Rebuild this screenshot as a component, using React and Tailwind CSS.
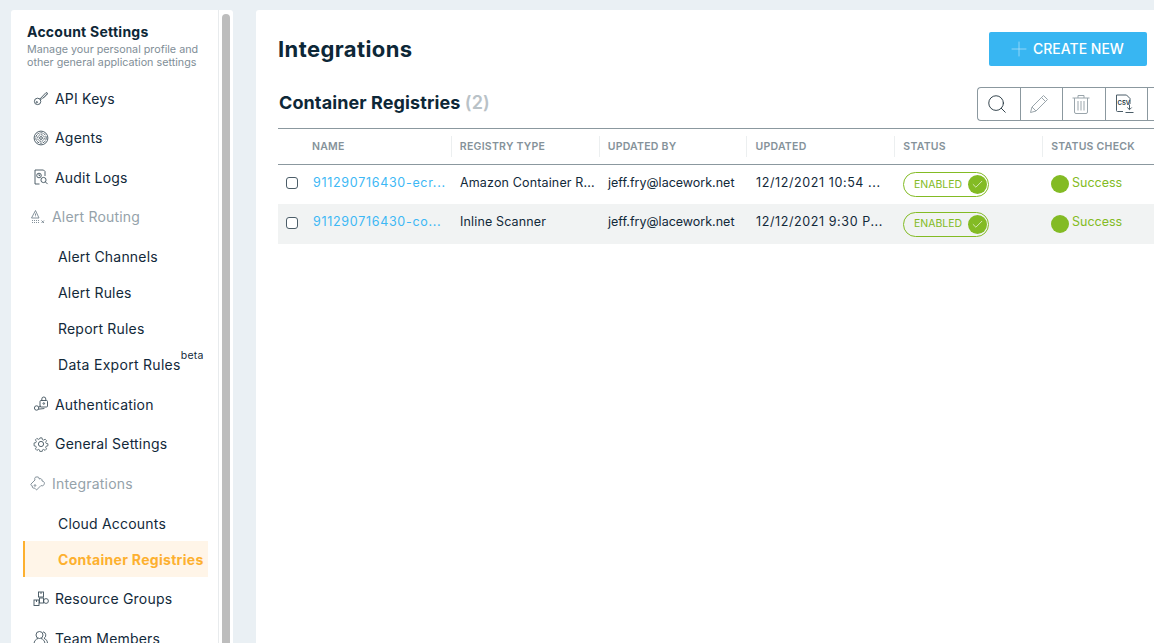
import { Search, Plus, Check } from "lucide-react";

const KeyIcon = () => (
  <svg width="16" height="16" viewBox="0 0 16 16" fill="none" stroke="currentColor" strokeWidth="0.9">
    <circle cx="4.6" cy="11.4" r="3.2" />
    <circle cx="3.8" cy="12.2" r="0.7" />
    <path d="M6.8 9.1 13 2.6l1.4.4-.2 1.5-1.3.4-.2 1.2-1.3.3-.3 1.2-1.3.2-2 2" />
  </svg>
);

const AgentIcon = () => (
  <svg width="16" height="16" viewBox="0 0 16 16" fill="none" stroke="currentColor" strokeWidth="0.9">
    <circle cx="8" cy="8" r="6.9" />
    <circle cx="8" cy="8" r="5.2" strokeDasharray="2.5 0.8" />
    <circle cx="8" cy="8" r="3.3" strokeDasharray="1.8 0.7" />
    <circle cx="8" cy="8" r="1.4" />
  </svg>
);

const AuditIcon = () => (
  <svg width="16" height="16" viewBox="0 0 16 16" fill="none" stroke="currentColor" strokeWidth="0.9">
    <path d="M6.5 15H2V1h8.5l1.5 1.5V7" />
    <circle cx="6" cy="6.500" r="2.300" />
    <path d="M6 5.200v1.400h1.200" />
    <circle cx="10.500" cy="11" r="2.600" />
    <path d="m12.400 12.900 2.200 2.200" />
  </svg>
);

const RoutingIcon = () => (
  <svg width="16" height="16" viewBox="0 0 16 16" fill="none" stroke="currentColor" strokeWidth="0.9">
    <path d="M5.500 1.500 9 9H1.500z" />
    <path d="M5.500 4.500v2.200M5.500 7.600v.3" />
    <path d="M2 11.500h7M2 13.500h7" strokeDasharray="1 1" />
    <path d="m11.500 11.500 2.500 2.500M14 11.500 11.500 14" />
  </svg>
);

const AuthIcon = () => (
  <svg width="16" height="16" viewBox="0 0 16 16" fill="none" stroke="currentColor" strokeWidth="0.9">
    <rect x="7" y="4.500" width="7.500" height="6.500" rx="1" />
    <path d="M8.800 4.500V3a2 2 0 0 1 4 0v1.500" />
    <circle cx="10.800" cy="7.500" r="0.800" />
    <circle cx="3.600" cy="12" r="2.200" />
    <path d="M5.600 11.200 8 10M5.400 13.200l6-.7" />
  </svg>
);

const GearIcon = () => (
  <svg width="16" height="16" viewBox="0 0 16 16" fill="none" stroke="currentColor" strokeWidth="0.9">
    <circle cx="8" cy="8" r="2.600" />
    <path d="M6.800 1h2.400l.4 2 1.300.6 1.800-1.100 1.700 1.700-1.100 1.800.6 1.300 2 .4v2.400l-2 .4-.6 1.300 1.100 1.800-1.700 1.700-1.800-1.100-1.300.6-.4 2H6.800l-.4-2-1.300-.6-1.800 1.100-1.700-1.700 1.100-1.800-.6-1.300-2-.4V6.800l2-.4.6-1.300-1.100-1.800 1.700-1.700 1.800 1.100 1.300-.6z" transform="translate(1 1) scale(0.875)" />
  </svg>
);

const PuzzleIcon = () => (
  <svg width="16" height="16" viewBox="0 0 16 16" fill="none" stroke="currentColor" strokeWidth="0.9">
    <path d="M1 9 5 5C4 3 5.500 1.500 7 2c1.500-.5 2.500 1 2 2 1.500-1 3.500 0 3 2 2 0 3 2 2 3.500-.5 1.500-2 1.500-3 1L6.500 15c-1-.5-1-2-2.500-2-1.500.5-2-1-1.500-2-1 0-2-1-1.500-2z" />
    <circle cx="5" cy="10.500" r="0.800" />
  </svg>
);

const GroupsIcon = () => (
  <svg width="16" height="16" viewBox="0 0 16 16" fill="none" stroke="currentColor" strokeWidth="0.9">
    <rect x="5.500" y="1" width="5" height="5" />
    <path d="M8 1v2" />
    <rect x="1" y="9" width="5" height="5.500" />
    <path d="M3.500 9v2" />
    <rect x="6.500" y="7" width="4" height="5" />
    <circle cx="13" cy="10" r="2.400" />
  </svg>
);

const TeamIcon = () => (
  <svg width="16" height="16" viewBox="0 0 16 16" fill="none" stroke="currentColor" strokeWidth="0.9">
    <circle cx="6.500" cy="5" r="3.500" />
    <path d="M1 14c0-3 2-5 4-5.500M8 8.500c2 .5 4 2.500 4 5.500" />
    <path d="M10 1.800a3.500 3.500 0 0 1 1 6.500c2 .7 3.500 2.700 3.500 5" />
  </svg>
);

const PencilIcon = () => (
  <svg width="20" height="20" viewBox="0 0 20 20" fill="none" stroke="#9aa5ab" strokeWidth="1">
    <path d="M1.500 18.500 3 13 14.500 1.500l4 4L7 17z" />
    <path d="m3 13 4 4M12.500 3.500l4 4" />
  </svg>
);

const TrashIcon = () => (
  <svg width="18" height="20" viewBox="0 0 18 20" fill="none" stroke="#9aa5ab" strokeWidth="1">
    <path d="M0.500 4h17M6 4V1.500h6V4" />
    <path d="M2.500 4v14a1.500 1.500 0 0 0 1.500 1.500h10a1.500 1.500 0 0 0 1.500-1.500V4" />
    <path d="M6 7v9.500M9 7v9.500M12 7v9.500" />
  </svg>
);

const CsvIcon = () => (
  <svg width="20" height="20" viewBox="0 0 20 20" fill="none" stroke="#4b5d68" strokeWidth="1">
    <path d="M8 17.500H2.500a1 1 0 0 1-1-1V1h10l3.500 3.500V10" />
    <text x="2.500" y="10.500" fontSize="6" fontWeight="600" fontFamily="Inter, sans-serif" fill="#22333d" stroke="none">CSV</text>
    <path d="M14.500 10.500v5M12.300 13.500l2.200 2.200 2.200-2.200M10.500 18.500h8" />
  </svg>
);

const topClass = "flex h-[39.500px] items-center gap-[6px] pl-[10px] text-[14px] tracking-[0.2px] text-[#12293a]";
const subClass = "flex h-9 items-center pl-[35px] text-[14px] tracking-[0.2px] text-[#12293a]";

const NavTop = ({ icon, label, muted }) => (
  <div className={muted ? "flex h-[39.500px] items-center gap-[6px] pl-[7px] text-[14px] tracking-[0.2px] text-[#95a2aa]" : topClass}>
    <span className={muted ? "text-[#76858e]" : "text-[#3f515c]"}>{icon}</span>
    <span>{label}</span>
  </div>
);

const columns = [
  { label: "NAME", width: "w-[147px]" },
  { label: "REGISTRY TYPE", width: "w-[148px]" },
  { label: "UPDATED BY", width: "w-[148px]" },
  { label: "UPDATED", width: "w-[148px]" },
  { label: "STATUS", width: "w-[148px]" },
  { label: "STATUS CHECK", width: "w-[112px]" },
];

const rows = [
  { name: "911290716430-ecr...", type: "Amazon Container R...", updated: "12/12/2021 10:54 ...", height: "h-[39px]" },
  { name: "911290716430-co...", type: "Inline Scanner", updated: "12/12/2021 9:30 P...", height: "h-[40px] bg-[#f1f3f3]" },
];

export default function App() {
  return (
    <div className="flex h-[643px] w-[1154px] overflow-hidden bg-[#eaf0f4] font-['Inter','Liberation_Sans',sans-serif]">
      <div className="ml-[11px] mt-[10px] flex h-[633px] w-[222px] shrink-0 overflow-hidden rounded-t-[3px] bg-white">
        <aside className="w-[208px] shrink-0 border-r border-[#e8ebed] pl-[12px] pr-[10px]">
          <div className="pl-[4px] pt-[13px]">
            <h2 className="text-[14px] font-bold leading-[17px] tracking-[0.25px] text-[#0d2737]">Account Settings</h2>
            <p className="mt-[3px] w-[190px] text-[10.750px] leading-[13px] text-[#7f8e97]">
              Manage your personal profile and other general application settings
            </p>
          </div>
          <nav className="mt-[9.500px]">
            <NavTop icon={<KeyIcon />} label="API Keys" />
            <NavTop icon={<AgentIcon />} label="Agents" />
            <NavTop icon={<AuditIcon />} label="Audit Logs" />
            <NavTop icon={<RoutingIcon />} label="Alert Routing" muted />
            <div className="py-[2px]">
              <div className={subClass}>Alert Channels</div>
              <div className={subClass}>Alert Rules</div>
              <div className={subClass}>Report Rules</div>
              <div className={subClass}>
                <span className="tracking-[0.3px]">Data Export Rules</span>
                <sup className="relative -top-[8px] text-[10.500px] leading-none">beta</sup>
              </div>
            </div>
            <NavTop icon={<AuthIcon />} label="Authentication" />
            <NavTop icon={<GearIcon />} label="General Settings" />
            <NavTop icon={<PuzzleIcon />} label="Integrations" muted />
            <div className="py-[2px]">
              <div className={subClass}>Cloud Accounts</div>
              <div className="flex h-9 items-center border-l-2 border-[#fdb02f] bg-[#fff5e8] pl-[33px] text-[14px] font-bold tracking-[0.3px] text-[#fdb02f]">
                Container Registries
              </div>
            </div>
            <NavTop icon={<GroupsIcon />} label="Resource Groups" />
            <NavTop icon={<TeamIcon />} label="Team Members" />
          </nav>
        </aside>
        <div className="w-[14px] shrink-0 pl-[3px] pt-[4px]">
          <div className="h-full w-[8px] rounded-t-full bg-[#bdbdbd]" />
        </div>
      </div>

      <main className="ml-[23px] mt-[10px] h-[633px] min-w-0 flex-1 overflow-hidden rounded-tl-[3px] bg-white pl-[22px]">
        <div className="flex h-[56px] w-[869px] items-end justify-between">
          <h1 className="pb-[3px] text-[22px] font-bold leading-[28px] tracking-[0.4px] text-[#0d2737]">Integrations</h1>
          <button className="flex h-[34px] w-[158px] items-center rounded-[2px] bg-[#38b6f2] pb-[1px] pl-[18px] text-[14px] font-medium text-white">
            <Plus size={24} strokeWidth={0.7} className="text-[#b9e4fa]" />
            <span className="ml-[2px]">CREATE NEW</span>
          </button>
        </div>

        <div className="mt-[20px] flex h-[36px] w-[876px] items-center justify-between">
          <h2 className="pb-[4px] pl-[1px] text-[18px] font-bold tracking-[0.1px] text-[#0d2737]">
            Container Registries <span className="font-semibold text-[#b9c2c7]">(2)</span>
          </h2>
          <div className="flex h-[34px] w-[177px] shrink-0 rounded-l-[4px] border border-r-0 border-[#8b989f]">
            <div className="flex w-[43px] items-center justify-center border-r border-[#8b989f] pr-[4px]">
              <Search size={22} strokeWidth={1} className="text-[#22333d]" />
            </div>
            <div className="flex w-[42px] items-center justify-center border-r border-[#8b989f] pr-[6px]">
              <PencilIcon />
            </div>
            <div className="flex w-[43px] items-center justify-center border-r border-[#8b989f] pr-[6px]">
              <TrashIcon />
            </div>
            <div className="flex w-[42px] items-center justify-center border-r border-[#8b989f] pr-[4px]">
              <CsvIcon />
            </div>
          </div>
        </div>

        <div className="mt-[6px] w-[876px]">
          <div className="flex h-[37px] items-center border-y border-[#8b989f] pl-[26px]">
            {columns.map((col, i) => (
              <div
                key={col.label}
                className={`flex h-[21px] items-center pl-[8px] text-[10.500px] font-semibold tracking-[0.25px] text-[#85929a] ${col.width} ${i > 0 ? "border-l border-[#eceff0]" : ""}`}
              >
                {col.label}
              </div>
            ))}
          </div>
          {rows.map((row) => (
            <div key={row.name} className={`flex items-center text-[12.500px] text-[#12293a] ${row.height}`}>
              <div className="w-[35px] pb-[3px] pl-[8px]">
                <div className="h-[12px] w-[12px] rounded-[3px] border border-[#4b5d68] bg-white" />
              </div>
              <div className="w-[147px] whitespace-nowrap pb-[3px] tracking-[0.7px] text-[#3db8f5]">{row.name}</div>
              <div className="w-[148px] whitespace-nowrap pb-[3px] tracking-[0.15px]">{row.type}</div>
              <div className="w-[148px] whitespace-nowrap pb-[3px]">jeff.fry@lacework.net</div>
              <div className="w-[147px] whitespace-nowrap pb-[3px] tracking-[0.6px]">{row.updated}</div>
              <div className="flex w-[148px] items-center">
                <div className="flex h-[25px] w-[86px] items-center justify-between rounded-full border border-[#83bb24] pl-[10px] pr-[1px] text-[10.500px] text-[#83bb24]">
                  ENABLED
                  <span className="flex h-[19px] w-[19px] items-center justify-center rounded-full bg-[#83bb24]">
                    <Check size={13} strokeWidth={1.2} className="text-white" />
                  </span>
                </div>
              </div>
              <div className="flex items-center gap-[3px] pb-[1px] text-[#83bb24]">
                <span className="h-[18px] w-[18px] rounded-full bg-[#83bb24]" />
                <span className="pb-[2px]">Success</span>
              </div>
            </div>
          ))}
        </div>
      </main>
    </div>
  );
}
